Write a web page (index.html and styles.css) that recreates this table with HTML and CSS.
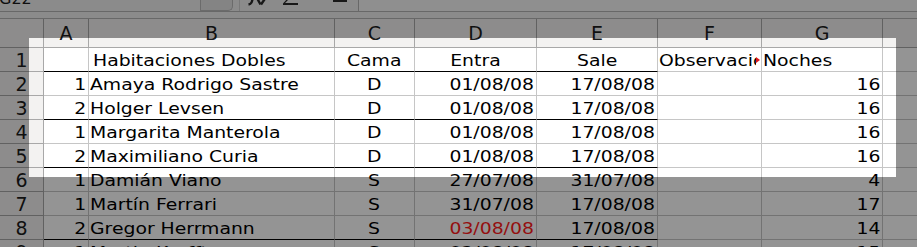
FILE: index.html
```html
<!DOCTYPE html>
<html lang="es">
<head>
<meta charset="utf-8">
<title>Habitaciones</title>
<link rel="stylesheet" href="styles.css">
</head>
<body>
<div class="app">
  <div class="toolbar">
    <div class="namebox"><span class="nb-text">G22</span></div>
    <div class="nb-btn"></div>
    <div class="sep"></div>
    <div class="tb-icons">
      <svg width="118" height="11" viewBox="0 0 118 11">
        <path d="M13 -3 C12 2 11.5 4 8.5 4.5" fill="none" stroke="#2a2a2a" stroke-width="2.4"/>
        <path d="M17 -2 L20.5 4.5 M25.5 -2 L21 4.5" fill="none" stroke="#2a2a2a" stroke-width="2.4"/>
        <path d="M50 -2 L45 3 L58 3 L58 5 L43 5 L43 3.5 L48 -2 Z" fill="#2a2a2a"/>
        <rect x="93" y="0" width="14" height="2" fill="#2a2a2a"/>
      </svg>
    </div>
    <div class="formula"></div>
  </div>
  <div class="strip"></div>
  <div class="sheet">
    <div class="cell hd corner"></div>
    <div class="cell hd">A</div>
    <div class="cell hd">B</div>
    <div class="cell hd">C</div>
    <div class="cell hd">D</div>
    <div class="cell hd">E</div>
    <div class="cell hd">F</div>
    <div class="cell hd">G</div>
    <div class="cell hd last"></div>

    <div class="cell hd rh">1</div>
    <div class="cell bb"></div>
    <div class="cell bb l ind"><span class="t">Habitaciones Dobles</span></div>
    <div class="cell bb c"><span class="t">Cama</span></div>
    <div class="cell bb c"><span class="t">Entra</span></div>
    <div class="cell bb c"><span class="t">Sale</span></div>
    <div class="cell l clip"><span class="cw"><span class="t">Observaciones</span></span><span class="more"></span></div>
    <div class="cell l"><span class="t">Noches</span></div>
    <div class="cell last"></div>

    <div class="cell hd rh">2</div>
    <div class="cell r"><span class="t">1</span></div>
    <div class="cell l"><span class="t">Amaya Rodrigo Sastre</span></div>
    <div class="cell c"><span class="t">D</span></div>
    <div class="cell r"><span class="t">01/08/08</span></div>
    <div class="cell r"><span class="t">17/08/08</span></div>
    <div class="cell"></div>
    <div class="cell r"><span class="t">16</span></div>
    <div class="cell last"></div>

    <div class="cell hd rh">3</div>
    <div class="cell bb r"><span class="t">2</span></div>
    <div class="cell bb l"><span class="t">Holger Levsen</span></div>
    <div class="cell bb c"><span class="t">D</span></div>
    <div class="cell bb r"><span class="t">01/08/08</span></div>
    <div class="cell bb r"><span class="t">17/08/08</span></div>
    <div class="cell"></div>
    <div class="cell r"><span class="t">16</span></div>
    <div class="cell last"></div>

    <div class="cell hd rh">4</div>
    <div class="cell r"><span class="t">1</span></div>
    <div class="cell l"><span class="t">Margarita Manterola</span></div>
    <div class="cell c"><span class="t">D</span></div>
    <div class="cell r"><span class="t">01/08/08</span></div>
    <div class="cell r"><span class="t">17/08/08</span></div>
    <div class="cell"></div>
    <div class="cell r"><span class="t">16</span></div>
    <div class="cell last"></div>

    <div class="cell hd rh">5</div>
    <div class="cell bb r"><span class="t">2</span></div>
    <div class="cell bb l"><span class="t">Maximiliano Curia</span></div>
    <div class="cell bb c"><span class="t">D</span></div>
    <div class="cell bb r"><span class="t">01/08/08</span></div>
    <div class="cell bb r"><span class="t">17/08/08</span></div>
    <div class="cell"></div>
    <div class="cell r"><span class="t">16</span></div>
    <div class="cell last"></div>

    <div class="cell hd rh">6</div>
    <div class="cell r"><span class="t">1</span></div>
    <div class="cell l"><span class="t">Damián Viano</span></div>
    <div class="cell c"><span class="t">S</span></div>
    <div class="cell r"><span class="t">27/07/08</span></div>
    <div class="cell r"><span class="t">31/07/08</span></div>
    <div class="cell"></div>
    <div class="cell r"><span class="t">4</span></div>
    <div class="cell last"></div>

    <div class="cell hd rh">7</div>
    <div class="cell r"><span class="t">1</span></div>
    <div class="cell l"><span class="t">Martín Ferrari</span></div>
    <div class="cell c"><span class="t">S</span></div>
    <div class="cell r"><span class="t">31/07/08</span></div>
    <div class="cell r"><span class="t">17/08/08</span></div>
    <div class="cell"></div>
    <div class="cell r"><span class="t">17</span></div>
    <div class="cell last"></div>

    <div class="cell hd rh">8</div>
    <div class="cell bb r"><span class="t">2</span></div>
    <div class="cell bb l"><span class="t">Gregor Herrmann</span></div>
    <div class="cell bb c"><span class="t">S</span></div>
    <div class="cell bb r red"><span class="t">03/08/08</span></div>
    <div class="cell bb r"><span class="t">17/08/08</span></div>
    <div class="cell"></div>
    <div class="cell r"><span class="t">14</span></div>
    <div class="cell last"></div>

    <div class="cell hd rh">9</div>
    <div class="cell r"><span class="t">1</span></div>
    <div class="cell l"><span class="t">Martin Krafft</span></div>
    <div class="cell c"><span class="t">S</span></div>
    <div class="cell r"><span class="t">02/08/08</span></div>
    <div class="cell r"><span class="t">17/08/08</span></div>
    <div class="cell"></div>
    <div class="cell r"><span class="t">15</span></div>
    <div class="cell last"></div>
  </div>
  <div class="spot"></div>
</div>
</body>
</html>
```

FILE: styles.css
```css
html, body {
  margin: 0;
  padding: 0;
}
body {
  width: 917px;
  height: 247px;
  overflow: hidden;
  background: #f0f0f0;
  font-family: "DejaVu Sans", "Liberation Sans", sans-serif;
  color: #000;
}
.app {
  position: relative;
  width: 917px;
  height: 247px;
  overflow: hidden;
}

/* toolbar / formula bar (only its bottom edge is visible) */
.toolbar {
  display: flex;
  height: 11px;
  border-bottom: 1px solid #b4b4b4;
  background: #f0f0f0;
  overflow: hidden;
}
.namebox {
  width: 200px;
  display: flex;
  align-items: flex-end;
  overflow: hidden;
}
.nb-text {
  font-size: 16px;
  line-height: 19px;
  margin-left: -1px;
  margin-bottom: 3px;
  color: #1a1a1a;
}
.nb-btn {
  width: 33px;
  box-sizing: border-box;
  border: 1px solid #b8b8b8;
  border-top: none;
  border-radius: 0 0 5px 0;
  background: #e4e4e4;
}
.sep {
  width: 1px;
  margin-left: 6px;
  background: #d0d0d0;
}
.tb-icons {
  width: 118px;
  display: flex;
}
.tb-icons svg {
  display: block;
}
.formula {
  flex: 1;
  border-left: 1px solid #b4b4b4;
  background: #f7f7f7;
}
.strip {
  height: 6px;
  background: #f0f0f0;
}

/* sheet grid */
.sheet {
  display: grid;
  grid-template-columns: 44px 45px 246px 80px 122px 121px 104px 121px 1fr;
  grid-template-rows: 29px repeat(9, 24px);
  border-top: 1px solid #b4b4b4;
  background: #fff;
}
.cell {
  box-sizing: border-box;
  border-right: 1px solid #c6c6c6;
  border-bottom: 1px solid #c6c6c6;
  background: #fff;
  overflow: hidden;
  display: flex;
  align-items: flex-end;
  padding: 0 1px 1px 1px;
  font-size: 16px;
  white-space: nowrap;
  position: relative;
}
.cell.last {
  border-right: none;
}
.hd {
  background: #f3f2f1;
  border-right-color: #a8a8a8;
  border-bottom-color: #a8a8a8;
  justify-content: center;
  align-items: center;
  padding: 0;
  font-size: 19px;
  color: #1c1c1c;
}
.bb {
  border-bottom-color: #000;
}
.t {
  display: inline-block;
  transform: scaleX(1.175);
  transform-origin: left center;
}
.l {
  justify-content: flex-start;
}
.l .t {
  transform-origin: left center;
}
.ind {
  padding-left: 4px;
}
.r {
  justify-content: flex-end;
  padding-right: 2px;
}
.r .t {
  transform-origin: right center;
}
.c {
  justify-content: center;
}
.c .t {
  transform-origin: center center;
}
.red {
  color: #ff1a1a;
}
.cw {
  display: block;
  width: 97px;
  overflow: hidden;
  flex: none;
}
.more {
  position: absolute;
  right: 1px;
  top: 9px;
  width: 0;
  height: 0;
  border-top: 3.5px solid transparent;
  border-bottom: 3.5px solid transparent;
  border-left: 4px solid #e0161a;
}

/* spotlight: dims everything but the highlighted region */
.spot {
  position: absolute;
  left: 29px;
  top: 38px;
  width: 867px;
  height: 139px;
  box-shadow: 0 0 0 1500px rgba(0, 0, 0, 0.42);
  pointer-events: none;
}
```
